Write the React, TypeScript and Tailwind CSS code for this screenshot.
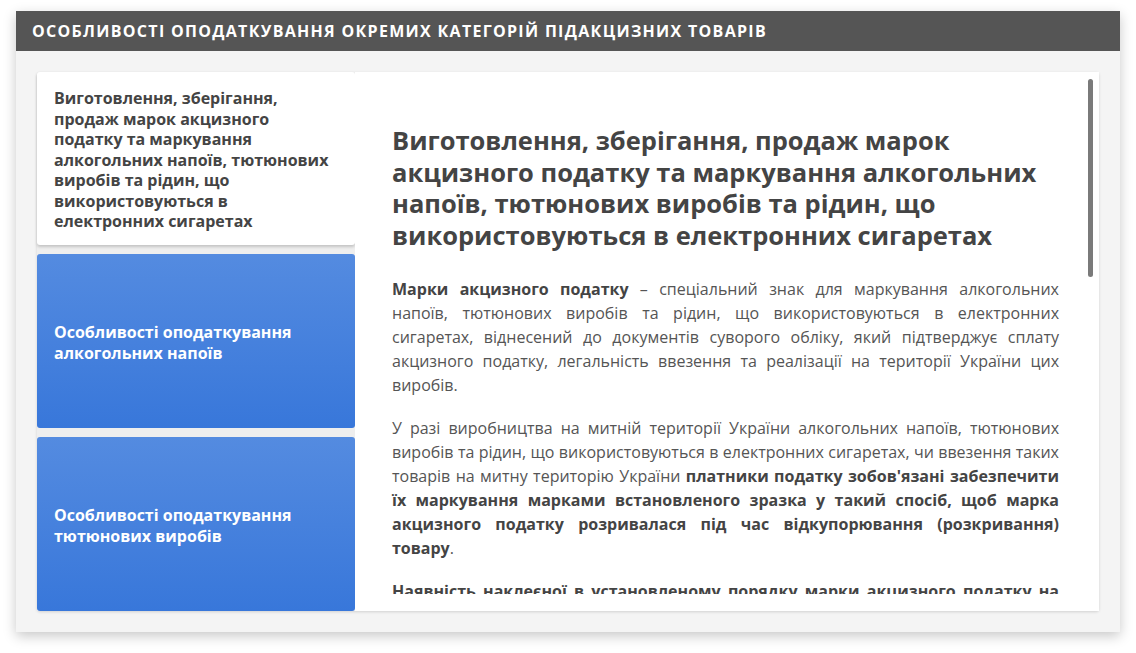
const tabs = [
  "Виготовлення, зберігання, продаж марок акцизного податку та маркування алкогольних напоїв, тютюнових виробів та рідин, що використовуються в електронних сигаретах",
  "Особливості оподаткування алкогольних напоїв",
  "Особливості оподаткування тютюнових виробів",
];

const App = () => {
  return (
    <div className="min-h-[653px] bg-white pt-[11px] px-4 font-['Open_Sans',sans-serif]">
      <div className="w-[1104px] shadow-[0_4px_12px_rgba(0,0,0,0.22)]">
        <div className="h-10 bg-[#555555] flex items-center px-4">
          <h1 className="text-white text-[16px] font-bold uppercase tracking-[1.3px]">
            Особливості оподаткування окремих категорій підакцизних товарів
          </h1>
        </div>
        <div className="bg-[#f4f4f4] p-[21px]">
          <div className="flex h-[539px] rounded-[3px] shadow-[0_1px_3px_rgba(0,0,0,0.15)]">
            <div className="w-[318px] flex flex-col gap-[9px] bg-[#eeeeee]">
              {tabs.map((tab, index) => (
                <div
                  key={index}
                  className={
                    index === 0
                      ? "h-[173px] flex items-center px-[17px] pt-[3px] bg-white rounded-[3px] shadow-[0_2px_3px_rgba(0,0,0,0.18)] text-[#444444] text-[16px] font-bold leading-[20.5px]"
                      : "h-[174px] flex items-center px-[17px] pt-[3px] rounded-[3px] bg-gradient-to-b from-[#548be0] to-[#3877da] text-white text-[16px] font-bold leading-[21px]"
                  }
                >
                  <span className={index === 0 ? "pr-2" : "pr-8"}>{tab}</span>
                </div>
              ))}
            </div>
            <div className="relative flex-1 bg-white overflow-hidden">
              <div className="h-[522px] overflow-hidden pl-[37px] pr-[40px] pt-[53px]">
                <h2 className="text-[25.5px] font-bold leading-[31.5px] text-[#444444] mb-[26px]">
                  Виготовлення, зберігання, продаж марок акцизного податку та маркування алкогольних напоїв, тютюнових виробів та рідин, що використовуються в електронних сигаретах
                </h2>
                <p className="text-[16px] leading-[24px] text-[#555555] text-justify mb-[19px]">
                  <b className="text-[#444444]">Марки акцизного податку</b> – спеціальний знак для маркування алкогольних напоїв, тютюнових виробів та рідин, що використовуються в електронних сигаретах, віднесений до документів суворого обліку, який підтверджує сплату акцизного податку, легальність ввезення та реалізації на території України цих виробів.
                </p>
                <p className="text-[16px] leading-[24px] text-[#555555] text-justify mb-[19px]">
                  У разі виробництва на митній території України алкогольних напоїв, тютюнових виробів та рідин, що використовуються в електронних сигаретах, чи ввезення таких товарів на митну територію України{" "}
                  <b className="text-[#444444]">
                    платники податку зобов'язані забезпечити їх маркування марками встановленого зразка у такий спосіб, щоб марка акцизного податку розривалася під час відкупорювання (розкривання) товару
                  </b>
                  .
                </p>
                <p className="text-[16px] leading-[24px] text-[#555555] text-justify">
                  <b className="text-[#444444]">
                    Наявність наклеєної в установленому порядку марки акцизного податку на пляшці (упаковці) алкогольного напою, пачці (упаковці) тютюнових виробів
                  </b>{" "}
                  є підтвердженням сплати акцизного податку.
                </p>
              </div>
              <div className="absolute right-[6px] top-[7px] w-[5px] h-[198px] rounded-full bg-[#7a7a7a]" />
            </div>
          </div>
        </div>
      </div>
    </div>
  );
};

export default App;
